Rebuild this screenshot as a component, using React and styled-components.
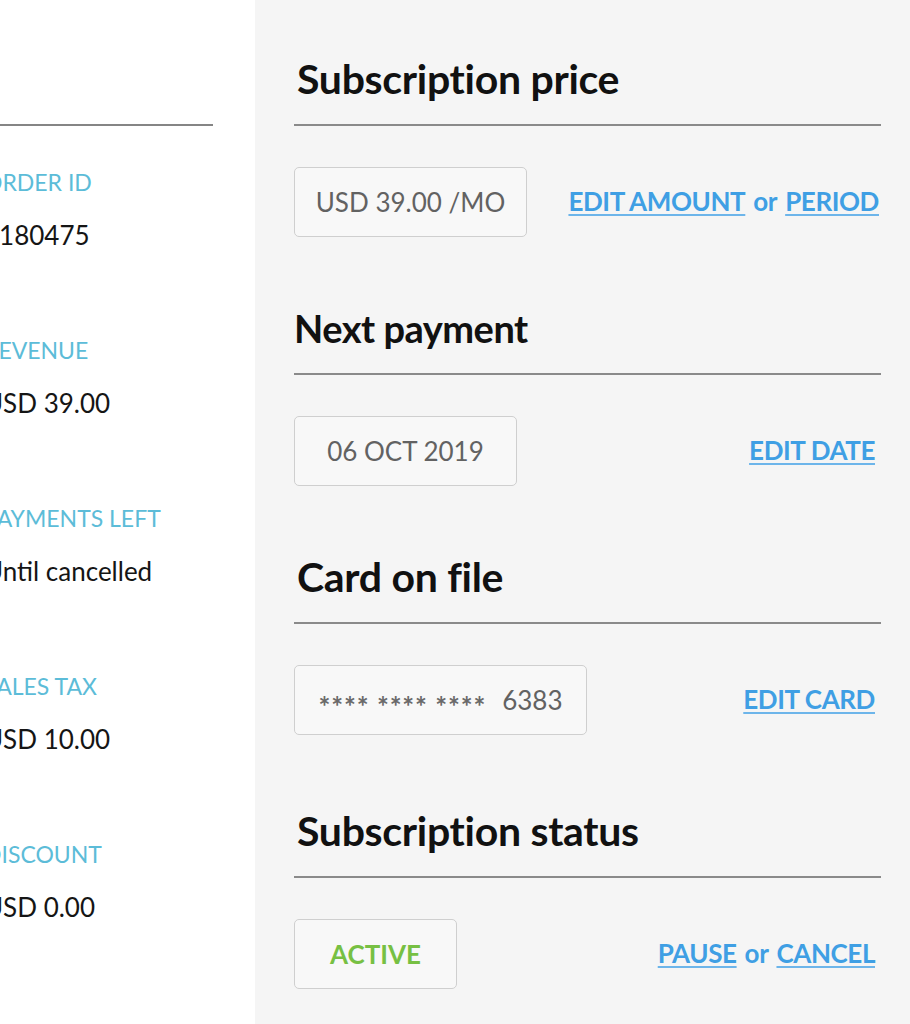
import React from "react"
import styled, { createGlobalStyle } from "styled-components"

const GlobalStyle = createGlobalStyle`
    html, body {
        margin: 0;
        padding: 0;
        background: #f5f5f5;
    }
    body {
        font-family: Lato, "Noto Sans", sans-serif;
        -webkit-font-smoothing: antialiased;
    }
`

const Page = styled.div`
    display: flex;
    width: 910px;
    height: 1024px;
    overflow: hidden;
`

const Summary = styled.div`
    width: 255px;
    flex-shrink: 0;
    background-color: #fff;
    padding: 124px 42px 0 0;
    box-sizing: border-box;
    overflow: hidden;
`

const SummaryRule = styled.div`
    height: 2px;
    background-color: #858585;
    margin-bottom: 42px;
`

const SummaryList = styled.div`
    margin-left: -16px;
    white-space: nowrap;
`

const SummaryItem = styled.div`
    margin-bottom: 85px;
    .label {
        font-size: 23px;
        line-height: 28px;
        color: #5cbcd8;
        text-transform: uppercase;
        margin-bottom: 23px;
    }
    .value {
        font-size: 26px;
        line-height: 32px;
        color: #151515;
    }
`

const Details = styled.div`
    flex: 1;
    background-color: #f5f5f5;
    padding: 55px 29px 0 39px;
`

const Section = styled.section`
    margin-bottom: 67px;
    padding-top: ${p => p.$offset || 0}px;
`

const Title = styled.h2`
    margin: 0 0 21px;
    font-size: ${p => p.$size || 41}px;
    line-height: 48px;
    font-weight: 700;
    color: #111;
    letter-spacing: ${p => (p.$size ? -0.5 : -0.3)}px;
    padding-left: ${p => (p.$size ? 0 : 3)}px;
`

const Rule = styled.div`
    height: 2px;
    background-color: #8a8a8a;
    margin-bottom: 41px;
`

const Row = styled.div`
    display: flex;
    align-items: center;
    justify-content: space-between;
    padding-right: ${p => p.$inset}px;
`

const ValueBox = styled.div`
    width: ${p => p.$width}px;
    height: 70px;
    box-sizing: border-box;
    border: 1.5px solid #cfcfcf;
    border-radius: 5px;
    background-color: #f8f8f8;
    display: flex;
    align-items: center;
    justify-content: center;
    font-size: 26px;
    color: ${p => (p.$status ? "#77c043" : "#626262")};
    font-weight: ${p => (p.$status ? 700 : 400)};
    white-space: nowrap;
    .stars {
        font-size: 28px;
        font-weight: 700;
        letter-spacing: 0.8px;
        margin-right: 16px;
        position: relative;
        top: 6px;
        color: #6a6a6a;
    }
`

const Actions = styled.div`
    font-size: 26px;
    font-weight: 700;
    color: #3f9fe4;
    letter-spacing: -0.4px;
    white-space: nowrap;
    margin-top: -2px;
    a {
        color: inherit;
        text-decoration: underline;
        text-decoration-thickness: 2px;
        text-underline-offset: 3px;
        text-decoration-color: #6db5ea;
    }
    .or {
        margin: 0 8px;
    }
`

const summaryData = [
    { id: 1, title: "Order ID", value: "#180475" },
    { id: 2, title: "Revenue", value: "USD 39.00" },
    { id: 3, title: "Payments left", value: "Until cancelled" },
    { id: 4, title: "Sales tax", value: "USD 10.00" },
    { id: 5, title: "Discount", value: "USD 0.00" },
]

const Links = ({ items }) => (
    <Actions>
        {items.map((item, i) => (
            <React.Fragment key={item}>
                {i > 0 && <span className="or">or</span>}
                <a href="#">{item}</a>
            </React.Fragment>
        ))}
    </Actions>
)

const App = () => {
    return (
        <>
            <GlobalStyle />
            <Page>
                <Summary>
                    <SummaryRule />
                    <SummaryList>
                        {summaryData.map(item => (
                            <SummaryItem key={item.id}>
                                <div className="label">{item.title}</div>
                                <div className="value">{item.value}</div>
                            </SummaryItem>
                        ))}
                    </SummaryList>
                </Summary>
                <Details>
                    <Section>
                        <Title>Subscription price</Title>
                        <Rule />
                        <Row $inset={2}>
                            <ValueBox $width={233}>USD 39.00 /MO</ValueBox>
                            <Links items={["EDIT AMOUNT", "PERIOD"]} />
                        </Row>
                    </Section>
                    <Section>
                        <Title $size={38}>Next payment</Title>
                        <Rule />
                        <Row $inset={6}>
                            <ValueBox $width={223}>06 OCT 2019</ValueBox>
                            <Links items={["EDIT DATE"]} />
                        </Row>
                    </Section>
                    <Section>
                        <Title>Card on file</Title>
                        <Rule />
                        <Row $inset={6}>
                            <ValueBox $width={293}>
                                <span className="stars">**** **** ****</span>6383
                            </ValueBox>
                            <Links items={["EDIT CARD"]} />
                        </Row>
                    </Section>
                    <Section $offset={5}>
                        <Title>Subscription status</Title>
                        <Rule />
                        <Row $inset={6}>
                            <ValueBox $width={163} $status>ACTIVE</ValueBox>
                            <Links items={["PAUSE", "CANCEL"]} />
                        </Row>
                    </Section>
                </Details>
            </Page>
        </>
    )
}

export default App
